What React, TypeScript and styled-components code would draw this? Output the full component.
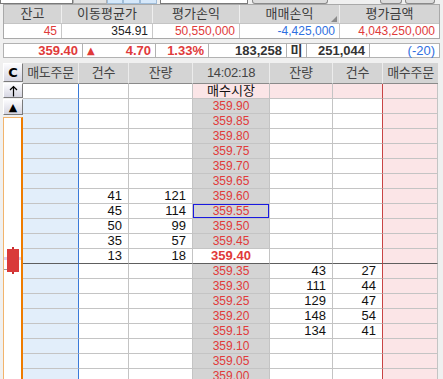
import React from "react";
import styled, { createGlobalStyle, css } from "styled-components";

const GlobalStyle = createGlobalStyle`
  * { box-sizing: border-box; }
  html, body { margin: 0; padding: 0; background: #f0f0f0; }
  body {
    font-family: "Liberation Sans", "Noto Sans CJK KR", sans-serif;
    font-size: 12px;
    color: #111;
  }
`;

const RED = "#e03a3a";
const BLUE = "#2f6fe0";

const Page = styled.div`
  width: 443px;
  height: 379px;
  overflow: hidden;
  background: #f0f0f0;
`;

/* bottom edge of the control bar that is scrolled out of view */
const TopStrip = styled.div`
  display: flex;
  height: 4px;
`;

const StripPiece = styled.div<{ $w: number; $bg: string; $gap?: number; $round?: boolean; $line?: string }>`
  width: ${({ $w }) => $w}px;
  margin-left: ${({ $gap }) => $gap ?? 0}px;
  background: ${({ $bg }) => $bg};
  border: 1px solid ${({ $line }) => $line ?? "#8a8a8a"};
  border-top: none;
  border-radius: ${({ $round }) => ($round ? "0 0 3px 3px" : "0")};
`;

const InfoTable = styled.div`
  margin-left: 3px;
  width: 437px;
  display: grid;
  grid-template-columns: 58px 91px 87px 100px 1fr;
  border: 1px solid #a9a9a9;
  background: #fff;
`;

const InfoHead = styled.div<{ $sort?: boolean }>`
  position: relative;
  height: 18px;
  line-height: 18px;
  background: #d5d5d5;
  color: #3c3c3c;
  font-size: 13px;
  text-align: center;
  border-right: 1px solid #efefef;
  &:nth-child(5n) { border-right: none; }
  ${({ $sort }) =>
    $sort &&
    css`
      &::after {
        content: "";
        position: absolute;
        right: 2px;
        bottom: 1px;
        border-left: 6px solid transparent;
        border-bottom: 6px solid #8a8a8a;
      }
    `}
`;

const InfoValue = styled.div<{ $color: string }>`
  height: 15px;
  line-height: 14px;
  border-top: 1px solid #c4c4c4;
  border-right: 1px solid #c8c8c8;
  text-align: right;
  padding-right: 4px;
  color: ${({ $color }) => $color};
  &:nth-child(5n) { border-right: none; }
`;

const QuoteRow = styled.div`
  margin: 4px 0 0 3px;
  width: 437px;
  display: grid;
  grid-template-columns: 78px 72px 52px 77px 19px 62px 1fr;
  gap: 1px;
  padding: 1px;
  background: #b2b2b2;
`;

const QuoteCell = styled.div<{ $color?: string; $bold?: boolean; $split?: boolean; $center?: boolean }>`
  height: 13px;
  line-height: 13px;
  background: #fff;
  font-size: 13px;
  font-weight: ${({ $bold }) => ($bold ? 700 : 400)};
  color: ${({ $color }) => $color ?? "#333"};
  padding: 0 4px;
  display: flex;
  align-items: center;
  justify-content: ${({ $split, $center }) => ($split ? "space-between" : $center ? "center" : "flex-end")};
`;

const Arrow = styled.span`
  font-size: 10px;
  color: ${RED};
  font-family: "DejaVu Sans", sans-serif;
`;

const Board = styled.div`
  display: flex;
  margin: 5px 0 0 3px;
`;

const Rail = styled.div`
  width: 20px;
  display: flex;
  flex-direction: column;
`;

const RailButton = styled.div<{ $h: number; $gap: number }>`
  height: ${({ $h }) => $h}px;
  margin-bottom: ${({ $gap }) => $gap}px;
  border: 1px solid;
  border-color: #fff #7a7a7a #7a7a7a #fff;
  background: linear-gradient(#fbfbfd, #d6d6e2);
  display: flex;
  align-items: center;
  justify-content: center;
  font-family: "DejaVu Sans", sans-serif;
  font-weight: 700;
  font-size: 13px;
  color: #000;
`;

const ChartBox = styled.div`
  flex: 1;
  border: 1px solid #f2b46c;
  border-right: 2px solid #ee7c00;
  border-bottom: none;
  background: #fff;
`;

const Book = styled.div`
  width: 415px;
  display: grid;
  grid-template-columns: 56px 50px 64px 77px 63px 50px 55px;
`;

const HeadCell = styled.div`
  height: 21px;
  line-height: 20px;
  background: #d4d4d4;
  color: #444;
  font-size: 13px;
  letter-spacing: -0.3px;
  text-align: center;
  border-right: 1px solid #ececec;
  border-bottom: 1px solid #8a8a8a;
  &:nth-child(7) { border-right: none; }
`;

type Tone = "white" | "sell" | "buy" | "price" | "market" | "current";

const toneBg: Record<Tone, string> = {
  white: "#fff",
  sell: "#e2eefa",
  buy: "#fbe5e7",
  price: "#d4d4d4",
  market: "#fbe5e7",
  current: "#fff",
};

const BookCell = styled.div<{ $tone: Tone; $edge?: string; $under?: boolean }>`
  height: 15px;
  line-height: 14px;
  padding-right: 6px;
  text-align: right;
  font-family: "Liberation Sans Narrow", "Liberation Sans", sans-serif;
  font-size: 13px;
  background: ${({ $tone }) => toneBg[$tone]};
  border-right: 1px solid ${({ $edge }) => $edge ?? "#c4c4c4"};
  border-bottom: 1px solid ${({ $under }) => ($under ? "#5e5e5e" : "#c4c4c4")};
  color: #111;
`;

const PriceCell = styled(BookCell)<{ $picked?: boolean }>`
  text-align: center;
  padding-right: 0;
  font-family: "Liberation Sans", "Noto Sans CJK KR", sans-serif;
  color: ${({ $tone }) => ($tone === "market" ? "#111" : RED)};
  font-weight: ${({ $tone }) => ($tone === "current" ? 700 : 400)};
  font-size: ${({ $tone }) => ($tone === "current" ? "13px" : $tone === "market" ? "13px" : "12px")};
  box-shadow: ${({ $picked }) => ($picked ? "inset 0 0 0 1px #1a1ae0" : "none")};
`;

const sellQty: Record<string, [number, number]> = {
  "359.60": [41, 121],
  "359.55": [45, 114],
  "359.50": [50, 99],
  "359.45": [35, 57],
  "359.40": [13, 18],
};

const buyQty: Record<string, [number, number]> = {
  "359.35": [43, 27],
  "359.30": [111, 44],
  "359.25": [129, 47],
  "359.20": [148, 54],
  "359.15": [134, 41],
};

const prices = Array.from({ length: 19 }, (_, i) => (359.9 - i * 0.05).toFixed(2));

function UpArrow() {
  return (
    <svg width="9" height="12" viewBox="0 0 9 12">
      <path d="M4.5 1.5V11.5M1 5L4.5 1.5L8 5" stroke="#000" strokeWidth="1.2" fill="none" />
    </svg>
  );
}

function Candle() {
  return (
    <svg width="17" height="262" viewBox="0 0 17 262">
      <rect x="0" y="139" width="17" height="3" fill="#ddd0ee" />
      <rect x="0" y="151" width="4" height="1" fill="#9a9a9a" />
      <rect x="8" y="129" width="2" height="27" fill="#c83030" />
      <rect x="3" y="131" width="12" height="23" fill="#d93a3a" />
    </svg>
  );
}

export default function App() {
  return (
    <Page>
      <GlobalStyle />
      <TopStrip>
        <StripPiece $w={73} $bg="#fff" $line="#7a7a7a" />
        <StripPiece $w={34} $bg="#e2e2e2" $line="#b0b0b0" />
        <StripPiece $w={16} $bg="#d6e8fa" $line="#9fbcd8" />
        <StripPiece $w={17} $bg="#d6e8fa" $line="#9fbcd8" />
        <StripPiece $w={17} $bg="#d6e8fa" $line="#9fbcd8" />
        <StripPiece $w={88} $gap={3} $bg="#fff" $line="#7a7a7a" />
        <StripPiece $w={76} $gap={4} $bg="#dcdcdc" $round />
        <StripPiece $w={22} $gap={52} $bg="#dcdcdc" $round />
        <StripPiece $w={30} $gap={3} $bg="#dcdcdc" $round />
      </TopStrip>

      <InfoTable>
        <InfoHead>잔고</InfoHead>
        <InfoHead>이동평균가</InfoHead>
        <InfoHead>평가손익</InfoHead>
        <InfoHead $sort>매매손익</InfoHead>
        <InfoHead>평가금액</InfoHead>
        <InfoValue $color={RED}>45</InfoValue>
        <InfoValue $color="#222">354.91</InfoValue>
        <InfoValue $color={RED}>50,550,000</InfoValue>
        <InfoValue $color={BLUE}>-4,425,000</InfoValue>
        <InfoValue $color={RED}>4,043,250,000</InfoValue>
      </InfoTable>

      <QuoteRow>
        <QuoteCell $bold $color={RED}>359.40</QuoteCell>
        <QuoteCell $bold $split $color={RED}>
          <Arrow>▲</Arrow>
          <span>4.70</span>
        </QuoteCell>
        <QuoteCell $bold $color={RED}>1.33%</QuoteCell>
        <QuoteCell $bold>183,258</QuoteCell>
        <QuoteCell $bold $center>미</QuoteCell>
        <QuoteCell $bold>251,044</QuoteCell>
        <QuoteCell $color={BLUE}>(-20)</QuoteCell>
      </QuoteRow>

      <Board>
        <Rail>
          <RailButton $h={19} $gap={1}>C</RailButton>
          <RailButton $h={15} $gap={1}>
            <UpArrow />
          </RailButton>
          <RailButton $h={16} $gap={2} style={{ fontSize: 11 }}>▲</RailButton>
          <ChartBox>
            <Candle />
          </ChartBox>
        </Rail>

        <Book>
          <HeadCell>매도주문</HeadCell>
          <HeadCell>건수</HeadCell>
          <HeadCell>잔량</HeadCell>
          <HeadCell>14:02:18</HeadCell>
          <HeadCell>잔량</HeadCell>
          <HeadCell>건수</HeadCell>
          <HeadCell>매수주문</HeadCell>

          <BookCell $tone="white" $edge="#3a7ad8" />
          <BookCell $tone="white" />
          <BookCell $tone="white" />
          <PriceCell $tone="market">매수시장</PriceCell>
          <BookCell $tone="market" />
          <BookCell $tone="market" $edge="#c84444" />
          <BookCell $tone="buy" />

          {prices.map((p) => {
            const sell = sellQty[p];
            const buy = buyQty[p];
            const current = p === "359.40";
            return (
              <React.Fragment key={p}>
                <BookCell $tone="sell" $edge="#3a7ad8" $under={current} />
                <BookCell $tone="white" $under={current}>{sell ? sell[0] : ""}</BookCell>
                <BookCell $tone="white" $under={current}>{sell ? sell[1] : ""}</BookCell>
                <PriceCell $tone={current ? "current" : "price"} $under={current} $picked={p === "359.55"}>
                  {p}
                </PriceCell>
                <BookCell $tone="white" $under={current}>{buy ? buy[0] : ""}</BookCell>
                <BookCell $tone="white" $edge="#c84444" $under={current}>{buy ? buy[1] : ""}</BookCell>
                <BookCell $tone="buy" $under={current} />
              </React.Fragment>
            );
          })}
        </Book>
      </Board>
    </Page>
  );
}
